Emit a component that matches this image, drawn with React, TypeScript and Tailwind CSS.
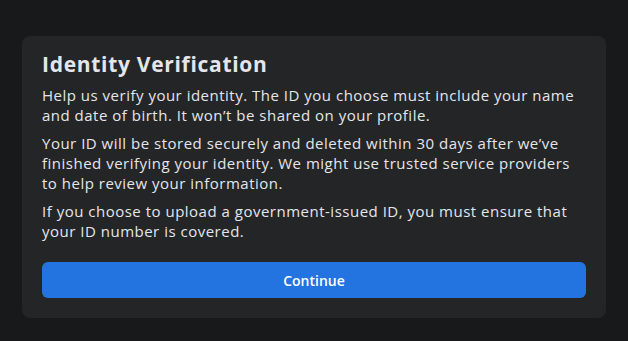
export default function App() {
  return (
    <div
      className="min-h-[341px] w-full bg-[#18191a] px-[22px] pt-9 pb-[23px]"
      style={{ fontFamily: '"Open Sans", "Noto Sans", sans-serif' }}
    >
      <div className="rounded-lg bg-[#242526] px-5 pt-[14px] pb-5">
        <h2 className="text-[21px] font-bold leading-7 tracking-[0.7px] text-[#e4e6eb]">
          Identity Verification
        </h2>
        <div className="mt-[7px] space-y-2 text-[15px] leading-5 tracking-[0.5px] text-[#e4e6eb]">
          <p>
            Help us verify your identity. The ID you choose must include your
            name and date of birth. It won’t be shared on your profile.
          </p>
          <p>
            Your ID will be stored securely and deleted within 30 days after
            we’ve finished verifying your identity. We might use trusted
            service providers to help review your information.
          </p>
          <p>
            If you choose to upload a government-issued ID, you must ensure
            that your ID number is covered.
          </p>
        </div>
        <button className="mt-[21px] flex h-9 w-full items-center justify-center rounded-md bg-[#2374e1] text-[14px] font-semibold text-white">
          Continue
        </button>
      </div>
    </div>
  );
}
